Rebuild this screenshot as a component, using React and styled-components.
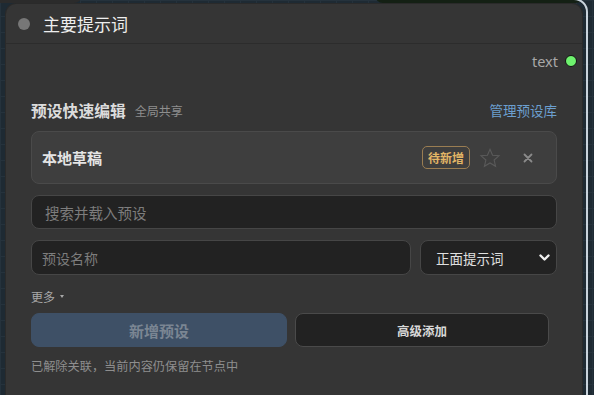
import styled, { createGlobalStyle } from "styled-components";

const Global = createGlobalStyle`
  html, body { margin: 0; padding: 0; }
  body {
    width: 594px;
    height: 395px;
    overflow: hidden;
    font-family: "Noto Sans", "Noto Sans CJK SC", sans-serif;
  }
`;

const cjk = `"Noto Sans CJK SC", "Noto Sans", sans-serif`;

const Canvas = styled.div`
  position: relative;
  width: 594px;
  height: 395px;
  overflow: hidden;
  background-color: #1e2a33;
  background-image:
    linear-gradient(#25323c 1px, transparent 1px),
    linear-gradient(90deg, #25323c 1px, transparent 1px);
  background-size: 16px 16px;
`;

const OtherNode = styled.div`
  position: absolute;
  left: ${(p) => p.$left}px;
  top: -20px;
  width: ${(p) => p.$width}px;
  height: 23px;
  border-radius: 0 0 8px 8px;
  background: ${(p) => p.$bg};
`;

const Selection = styled.div`
  position: absolute;
  left: -20px;
  top: -2px;
  width: 608px;
  height: 420px;
  border: 2px solid #c9d3dc;
  border-radius: 14px;
  box-sizing: border-box;
`;

const Node = styled.div`
  position: absolute;
  left: 6px;
  top: 4px;
  width: 576px;
  height: 400px;
  background: #353535;
  border-radius: 10px 10px 0 0;
  box-shadow: 0 0 0 1px #2a2a2a;
  color: #ddd;
`;

const TitleBar = styled.div`
  display: flex;
  align-items: center;
  gap: 13px;
  height: 39px;
  padding-left: 12px;
  border-bottom: 1px solid #2c2c2c;
`;

const Dot = styled.span`
  width: 12px;
  height: 12px;
  border-radius: 50%;
  background: #777;
`;

const Title = styled.span`
  font-family: ${cjk};
  font-size: 17px;
  color: #eee;
`;

const OutputRow = styled.div`
  display: flex;
  justify-content: flex-end;
  align-items: center;
  gap: 7px;
  height: 34px;
  padding-right: 5px;
`;

const OutputLabel = styled.span`
  font-family: "Noto Sans", sans-serif;
  font-size: 14.5px;
  color: #a8a8a8;
`;

const Socket = styled.span`
  width: 10px;
  height: 10px;
  border-radius: 50%;
  background: #6ef26e;
  border: 1px solid #111;
`;

const Body = styled.div`
  padding: 0 25px;
  font-family: ${cjk};
`;

const SectionHeader = styled.div`
  display: flex;
  align-items: center;
  height: 20px;
  margin-top: 22px;
`;

const SectionTitle = styled.span`
  font-size: 15.8px;
  font-weight: 700;
  color: #dcdcdc;
`;

const SectionNote = styled.span`
  font-size: 12px;
  color: #8e8e8e;
  margin-left: 9px;
`;

const ManageLink = styled.span`
  margin-left: auto;
  font-size: 13.5px;
  color: #6c9fcf;
`;

const DraftCard = styled.div`
  display: flex;
  align-items: center;
  height: 53px;
  margin-top: 11px;
  padding: 0 10px;
  box-sizing: border-box;
  background: #3e3e3e;
  border: 1px solid #4a4a4a;
  border-radius: 8px;
`;

const DraftName = styled.span`
  font-size: 15px;
  font-weight: 700;
  color: #e4e4e4;
`;

const Badge = styled.span`
  margin-left: auto;
  padding: 2px 5px;
  font-size: 12px;
  font-weight: 700;
  color: #e2b566;
  border: 1px solid #9a7d52;
  border-radius: 5px;
  line-height: 17px;
`;

const IconBtn = styled.span`
  display: flex;
  align-items: center;
  justify-content: center;
  width: ${(p) => p.$w}px;
  color: ${(p) => p.$color};
`;

const Field = styled.div`
  display: flex;
  align-items: center;
  height: ${(p) => p.$h}px;
  padding: 0 ${(p) => p.$padR || p.$pad}px 0 ${(p) => p.$pad}px;
  box-sizing: border-box;
  background: #222;
  border: 1px solid #464646;
  border-radius: 8px;
  font-size: ${(p) => p.$size || 14.5}px;
  color: ${(p) => p.$color || "#7d7d7d"};
`;

const Stack = styled.div`
  margin-top: 11px;
`;

const FieldRow = styled.div`
  display: grid;
  grid-template-columns: 380px 137px;
  gap: 9px;
  margin-top: 11px;
`;

const Chevron = styled.svg`
  margin-left: auto;
`;

const MoreToggle = styled.div`
  display: flex;
  align-items: center;
  gap: 5px;
  margin-top: 13px;
  height: 16px;
  font-size: 12px;
  color: #a8a8a8;
`;

const Caret = styled.span`
  width: 0;
  height: 0;
  border-left: 2.5px solid transparent;
  border-right: 2.5px solid transparent;
  border-top: 3px solid #a8a8a8;
`;

const ButtonRow = styled.div`
  display: grid;
  grid-template-columns: 256px 254px;
  gap: 8px;
  margin-top: 9px;
`;

const Button = styled.div`
  display: flex;
  align-items: center;
  justify-content: center;
  height: 34px;
  box-sizing: border-box;
  border-radius: 8px;
  font-weight: 700;
  font-size: ${(p) => (p.$primary ? 15 : 12.5)}px;
  background: ${(p) => (p.$primary ? "#3e5066" : "#222")};
  border: 1px solid ${(p) => (p.$primary ? "#3e5066" : "#4a4a4a")};
  color: ${(p) => (p.$primary ? "#7b8693" : "#d8d8d8")};
`;

const Status = styled.div`
  margin-top: 11px;
  font-size: 12.2px;
  line-height: 16px;
  color: #8e8e8e;
`;

export default function App() {
  return (
    <>
      <Global />
      <Canvas>
        <OtherNode $left={-10} $width={92} $bg="#2b2b2b" />
        <OtherNode $left={375} $width={208} $bg="#142014" />
        <Selection />
        <Node>
          <TitleBar>
            <Dot />
            <Title>主要提示词</Title>
          </TitleBar>
          <OutputRow>
            <OutputLabel>text</OutputLabel>
            <Socket />
          </OutputRow>
          <Body>
            <SectionHeader>
              <SectionTitle>预设快速编辑</SectionTitle>
              <SectionNote>全局共享</SectionNote>
              <ManageLink>管理预设库</ManageLink>
            </SectionHeader>
            <DraftCard>
              <DraftName>本地草稿</DraftName>
              <Badge>待新增</Badge>
              <IconBtn $w={40} $color="#5a5a5a">
                <svg width="22" height="22" viewBox="0 0 24 24" fill="none" stroke="currentColor" strokeWidth="1.2" strokeLinejoin="miter">
                  <path d="M12 2.5l2.8 6.5 7 .6-5.3 4.6 1.6 6.9L12 17.4l-6.1 3.7 1.6-6.9-5.3-4.6 7-.6z" />
                </svg>
              </IconBtn>
              <IconBtn $w={36} $color="#8a8a8a">
                <svg width="10" height="10" viewBox="0 0 10 10" stroke="currentColor" strokeWidth="1.8" strokeLinecap="round">
                  <path d="M1.5 1.5l7 7M8.5 1.5l-7 7" />
                </svg>
              </IconBtn>
            </DraftCard>
            <Stack>
              <Field $h={34} $pad={13}>搜索并载入预设</Field>
            </Stack>
            <FieldRow>
              <Field $h={35} $pad={10} $size={14}>预设名称</Field>
              <Field $h={35} $pad={15} $padR={6} $size={13.5} $color="#e0e0e0">
                正面提示词
                <Chevron width="11" height="8" viewBox="0 0 11 8" fill="none" stroke="#f0f0f0" strokeWidth="2.4" strokeLinecap="round" strokeLinejoin="round">
                  <path d="M1.5 1.5l4 4 4-4" />
                </Chevron>
              </Field>
            </FieldRow>
            <MoreToggle>
              更多
              <Caret />
            </MoreToggle>
            <ButtonRow>
              <Button $primary>新增预设</Button>
              <Button>高级添加</Button>
            </ButtonRow>
            <Status>已解除关联，当前内容仍保留在节点中</Status>
          </Body>
        </Node>
      </Canvas>
    </>
  );
}
